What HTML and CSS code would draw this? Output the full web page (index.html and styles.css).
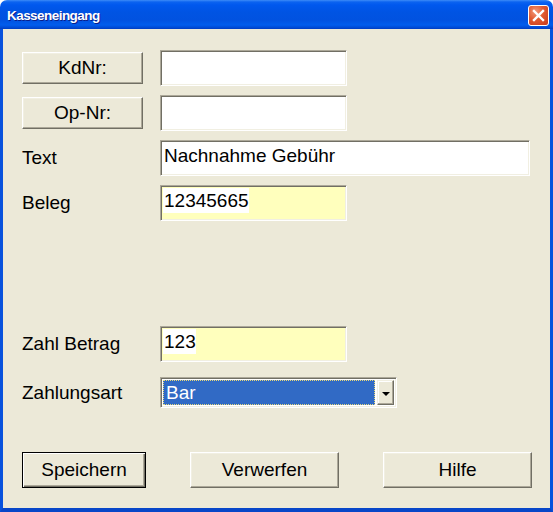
FILE: index.html
```html
<!DOCTYPE html>
<html>
<head>
<meta charset="utf-8">
<link rel="stylesheet" href="styles.css">
</head>
<body>
<div class="window">
  <div class="titlebar">
    <span class="title">Kasseneingang</span>
    <span class="close">
      <svg width="13" height="13" viewBox="0 0 13 13"><path d="M2 2 L11 11 M11 2 L2 11" stroke="#fff" stroke-width="2.4" stroke-linecap="square"/></svg>
    </span>
  </div>
  <div class="frame">
    <div class="row r1">
      <div class="btn lbtn">KdNr:</div>
      <div class="field short"></div>
    </div>
    <div class="row">
      <div class="btn lbtn">Op-Nr:</div>
      <div class="field short"></div>
    </div>
    <div class="row">
      <div class="label">Text</div>
      <div class="field long"><span class="val">Nachnahme Gebühr</span></div>
    </div>
    <div class="row">
      <div class="label">Beleg</div>
      <div class="field short yellow"><span class="val hl">12345665</span></div>
    </div>
    <div class="row r5">
      <div class="label">Zahl Betrag</div>
      <div class="field short yellow"><span class="val hl">123</span></div>
    </div>
    <div class="row r6">
      <div class="label">Zahlungsart</div>
      <div class="combo">
        <div class="sel">Bar</div>
        <div class="drop"><span class="arrow"></span></div>
      </div>
    </div>
    <div class="actions">
      <div class="btn abtn default">Speichern</div>
      <div class="btn abtn wide">Verwerfen</div>
      <div class="btn abtn wide">Hilfe</div>
    </div>
  </div>
</div>
</body>
</html>
```

FILE: styles.css
```css
html, body {
  margin: 0;
  padding: 0;
  background: #ffffff;
}
.window {
  width: 553px;
  height: 512px;
  display: flex;
  flex-direction: column;
  font-family: "Liberation Sans", Arial, sans-serif;
  font-size: 19px;
  color: #000;
}
.titlebar {
  height: 29px;
  box-sizing: border-box;
  border-radius: 7px 7px 0 0;
  background: linear-gradient(#3d8cf7 0px, #0b63f0 2px, #0058ee 5px, #0054e3 12px, #0152e0 20px, #015ded 25px, #0047d0 28px, #003cc0 29px);
  display: flex;
  align-items: center;
  justify-content: space-between;
  padding: 0 4px 0 7px;
}
.title {
  color: #fff;
  font-weight: bold;
  font-size: 13.5px;
  letter-spacing: -0.55px;
  text-shadow: 1px 1px 0 #0a1e8a;
  margin-top: 1px;
}
.close {
  width: 21px;
  height: 21px;
  box-sizing: border-box;
  border: 1px solid #fff;
  border-radius: 3px;
  background: radial-gradient(circle at 35% 30%, #f39a7c 0%, #e05a30 45%, #c6391b 100%);
  display: flex;
  align-items: center;
  justify-content: center;
  margin-top: 2px;
}
.close svg { display: block; }
.frame {
  flex: 1;
  background: #ece9d8;
  border-left: 3px solid #0852dd;
  border-right: 3px solid #0852dd;
  border-bottom: 4px solid #0846c8;
  padding: 21px 0 0 19px;
  display: flex;
  flex-direction: column;
}
.row {
  height: 36px;
  display: flex;
  align-items: center;
  gap: 17px;
  margin-top: 9px;
}
.row.r1 { margin-top: 0; }
.row.r5 { margin-top: 105px; }
.row.r6 { margin-top: 15px; height: 31px; }
.label {
  width: 121px;
}
.btn {
  box-sizing: border-box;
  background: #ece9d8;
  border-top: 1px solid #ffffff;
  border-left: 1px solid #ffffff;
  border-right: 1px solid #716f64;
  border-bottom: 1px solid #716f64;
  box-shadow: inset -1px -1px 0 #aca899, inset 1px 1px 0 #f1efe2;
  display: flex;
  align-items: center;
  justify-content: center;
}
.lbtn {
  width: 121px;
  height: 32px;
}
.field {
  height: 36px;
  box-sizing: border-box;
  background: #fff;
  border-top: 1px solid #aca899;
  border-left: 1px solid #aca899;
  border-right: 1px solid #ffffff;
  border-bottom: 1px solid #ffffff;
  box-shadow: inset 1px 1px 0 #716f64, inset -1px -1px 0 #f1efe2;
  padding: 2px 2px;
  display: flex;
  align-items: flex-start;
}
.field.short { width: 187px; }
.field.long { width: 370px; }
.field.yellow { background: #ffffbd; }
.val {
  line-height: 25px;
  padding-left: 1px;
  white-space: nowrap;
}
.val.hl { background: #fff; }
.combo {
  width: 237px;
  height: 31px;
  box-sizing: border-box;
  background: #fff;
  border-top: 1px solid #aca899;
  border-left: 1px solid #aca899;
  border-right: 1px solid #ffffff;
  border-bottom: 1px solid #ffffff;
  box-shadow: inset 1px 1px 0 #716f64, inset -1px -1px 0 #f1efe2;
  padding: 2px;
  display: flex;
  gap: 2px;
}
.sel {
  flex: 1;
  background: #316ac5;
  color: #fff;
  outline: 1px dotted #e8d87a;
  outline-offset: -1px;
  border: 1px dotted #000;
  display: flex;
  align-items: center;
  padding-left: 2px;
  line-height: 1;
}
.drop {
  width: 17px;
  box-sizing: border-box;
  background: #ece9d8;
  border-top: 1px solid #f1efe2;
  border-left: 1px solid #f1efe2;
  border-right: 1px solid #716f64;
  border-bottom: 1px solid #716f64;
  box-shadow: inset -1px -1px 0 #aca899, inset 1px 1px 0 #ffffff;
  display: flex;
  align-items: center;
  justify-content: center;
}
.arrow {
  width: 0;
  height: 0;
  border-left: 4px solid transparent;
  border-right: 4px solid transparent;
  border-top: 4px solid #000;
  margin-top: 2px;
}
.actions {
  margin-top: 44px;
  display: flex;
  gap: 44px;
}
.abtn {
  height: 36px;
}
.abtn.default {
  width: 124px;
  border: 1px solid #000;
  box-shadow: inset 1px 1px 0 #ffffff, inset -1px -1px 0 #716f64, inset -2px -2px 0 #aca899;
}
.abtn.wide { width: 149px; }
```
